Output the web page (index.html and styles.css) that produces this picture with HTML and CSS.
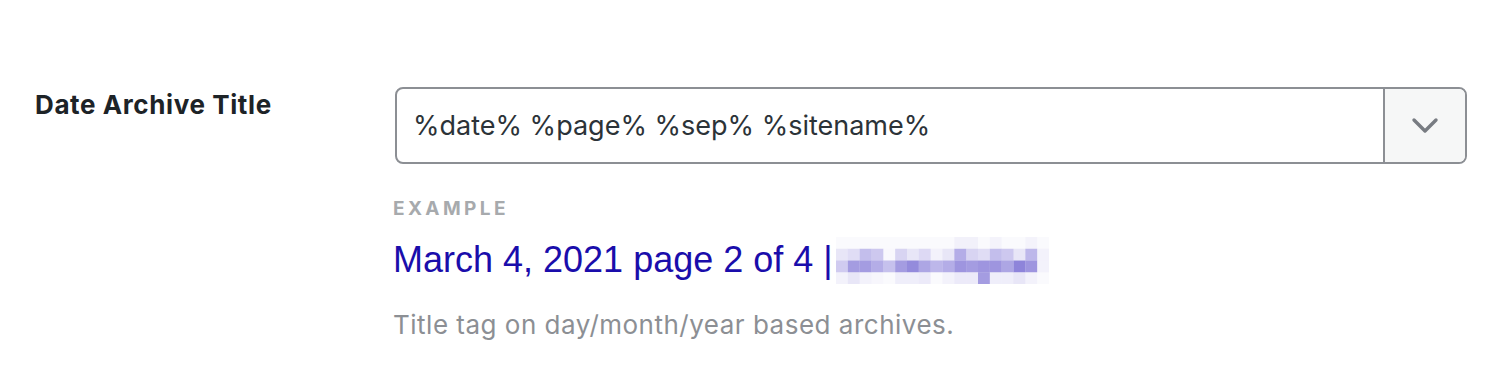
FILE: index.html
```html
<!DOCTYPE html>
<html lang="en">
<head>
    <meta charset="UTF-8">
    <title>Date Archive Title</title>
    <link rel="stylesheet" href="styles.css">
</head>
<body>
    <div class="setting-row">
        <div class="setting-label">Date Archive Title</div>
        <div class="setting-field">
            <div class="select">
                <div class="select-value">%date% %page% %sep% %sitename%</div>
                <div class="select-toggle">
                    <svg width="28" height="18" viewBox="0 0 28 18">
                        <path d="M3 3 L14 14 L25 3" fill="none" stroke="#787c82" stroke-width="3.4" stroke-linecap="round" stroke-linejoin="round"/>
                    </svg>
                </div>
            </div>

            <div class="example-label">Example</div>
            <div class="example-preview">
                <span class="preview-title">March 4, 2021 page 2 of 4 |</span>
                <!-- site name is blurred in the original -->
                <svg class="preview-blur" width="213" height="47" viewBox="0 0 18 4" preserveAspectRatio="none">
                    <g fill="rgb(98, 84, 204)">
                        <rect x="0" y="0" width="18" height="1" opacity="0.03"/>
                        <rect x="10" y="0" width="2" height="1" opacity="0.05"/>
                        <rect x="13" y="0" width="1" height="1" opacity="0.04"/>
                        <rect x="16" y="0" width="1" height="1" opacity="0.04"/>

                        <rect x="0" y="1" width="1" height="1" opacity="0.15"/>
                        <rect x="1" y="1" width="1" height="1" opacity="0.2"/>
                        <rect x="2" y="1" width="1" height="1" opacity="0.38"/>
                        <rect x="3" y="1" width="1" height="1" opacity="0.32"/>
                        <rect x="4" y="1" width="1" height="1" opacity="0.04"/>
                        <rect x="5" y="1" width="1" height="1" opacity="0.25"/>
                        <rect x="6" y="1" width="1" height="1" opacity="0.15"/>
                        <rect x="7" y="1" width="1" height="1" opacity="0.22"/>
                        <rect x="8" y="1" width="1" height="1" opacity="0.08"/>
                        <rect x="9" y="1" width="1" height="1" opacity="0.15"/>
                        <rect x="10" y="1" width="1" height="1" opacity="0.48"/>
                        <rect x="11" y="1" width="1" height="1" opacity="0.25"/>
                        <rect x="12" y="1" width="1" height="1" opacity="0.2"/>
                        <rect x="13" y="1" width="1" height="1" opacity="0.38"/>
                        <rect x="14" y="1" width="1" height="1" opacity="0.32"/>
                        <rect x="15" y="1" width="1" height="1" opacity="0.15"/>
                        <rect x="16" y="1" width="1" height="1" opacity="0.42"/>
                        <rect x="17" y="1" width="1" height="1" opacity="0.08"/>

                        <rect x="0" y="2" width="1" height="1" opacity="0.3"/>
                        <rect x="1" y="2" width="1" height="1" opacity="0.58"/>
                        <rect x="2" y="2" width="1" height="1" opacity="0.58"/>
                        <rect x="3" y="2" width="1" height="1" opacity="0.48"/>
                        <rect x="4" y="2" width="1" height="1" opacity="0.36"/>
                        <rect x="5" y="2" width="1" height="1" opacity="0.58"/>
                        <rect x="6" y="2" width="1" height="1" opacity="0.68"/>
                        <rect x="7" y="2" width="1" height="1" opacity="0.52"/>
                        <rect x="8" y="2" width="1" height="1" opacity="0.42"/>
                        <rect x="9" y="2" width="1" height="1" opacity="0.48"/>
                        <rect x="10" y="2" width="1" height="1" opacity="0.62"/>
                        <rect x="11" y="2" width="1" height="1" opacity="0.58"/>
                        <rect x="12" y="2" width="1" height="1" opacity="0.62"/>
                        <rect x="13" y="2" width="1" height="1" opacity="0.62"/>
                        <rect x="14" y="2" width="1" height="1" opacity="0.52"/>
                        <rect x="15" y="2" width="1" height="1" opacity="0.72"/>
                        <rect x="16" y="2" width="1" height="1" opacity="0.62"/>
                        <rect x="17" y="2" width="1" height="1" opacity="0.08"/>

                        <rect x="0" y="3" width="1" height="1" opacity="0.08"/>
                        <rect x="1" y="3" width="1" height="1" opacity="0.15"/>
                        <rect x="2" y="3" width="1" height="1" opacity="0.08"/>
                        <rect x="3" y="3" width="1" height="1" opacity="0.05"/>
                        <rect x="4" y="3" width="1" height="1" opacity="0.03"/>
                        <rect x="5" y="3" width="1" height="1" opacity="0.1"/>
                        <rect x="6" y="3" width="1" height="1" opacity="0.1"/>
                        <rect x="7" y="3" width="1" height="1" opacity="0.12"/>
                        <rect x="8" y="3" width="1" height="1" opacity="0.03"/>
                        <rect x="9" y="3" width="1" height="1" opacity="0.08"/>
                        <rect x="10" y="3" width="1" height="1" opacity="0.12"/>
                        <rect x="11" y="3" width="1" height="1" opacity="0.12"/>
                        <rect x="12" y="3" width="1" height="1" opacity="0.58"/>
                        <rect x="13" y="3" width="1" height="1" opacity="0.1"/>
                        <rect x="14" y="3" width="1" height="1" opacity="0.1"/>
                        <rect x="15" y="3" width="1" height="1" opacity="0.15"/>
                        <rect x="16" y="3" width="1" height="1" opacity="0.08"/>
                        <rect x="17" y="3" width="1" height="1" opacity="0.03"/>
                    </g>
                </svg>
            </div>

            <p class="setting-desc">Title tag on day/month/year based archives.</p>
        </div>
    </div>
</body>
</html>
```

FILE: styles.css
```css
:root {
    --text-color: #1d2327;
    --input-text: #2c3338;
    --border-color: #8c8f94;
    --muted-color: #8c8f94;
    --label-muted: #a7aaad;
    --link-color: #1a0dab;
    --toggle-bg: #f6f7f7;
}

body {
    margin: 0;
    background: #fff;
    font-family: Inter, "Liberation Sans", sans-serif;
    color: var(--text-color);
}

.setting-row {
    display: grid;
    grid-template-columns: 358px 1fr;
    padding: 87px 27px 0 35px;
}

.setting-label {
    padding-top: 2px;
    font-size: 26px;
    font-weight: 700;
    letter-spacing: 0.6px;
    line-height: 32px;
}

.select {
    display: flex;
    height: 77px;
    margin-left: 2px;
    box-sizing: border-box;
    border: 2px solid var(--border-color);
    border-radius: 8px;
    overflow: hidden;
}

.select-value {
    flex: 1;
    display: flex;
    align-items: center;
    padding: 0 16px;
    font-size: 27px;
    color: var(--input-text);
}

.select-toggle {
    width: 80px;
    display: flex;
    align-items: center;
    justify-content: center;
    background: var(--toggle-bg);
    border-left: 2px solid var(--border-color);
}

.example-label {
    margin-top: 33px;
    font-size: 19px;
    font-weight: 700;
    letter-spacing: 3.4px;
    text-transform: uppercase;
    line-height: 24px;
    color: var(--label-muted);
}

.example-preview {
    display: flex;
    align-items: center;
    gap: 3px;
    margin-top: 12px;
    height: 54px;
}

.preview-title {
    font-family: "Liberation Sans", Arial, sans-serif;
    font-size: 36px;
    color: var(--link-color);
    white-space: nowrap;
}

.preview-blur {
    display: block;
}

.setting-desc {
    margin: 22px 0 0;
    font-size: 26px;
    letter-spacing: 0.5px;
    line-height: 32px;
    color: var(--muted-color);
}
```
